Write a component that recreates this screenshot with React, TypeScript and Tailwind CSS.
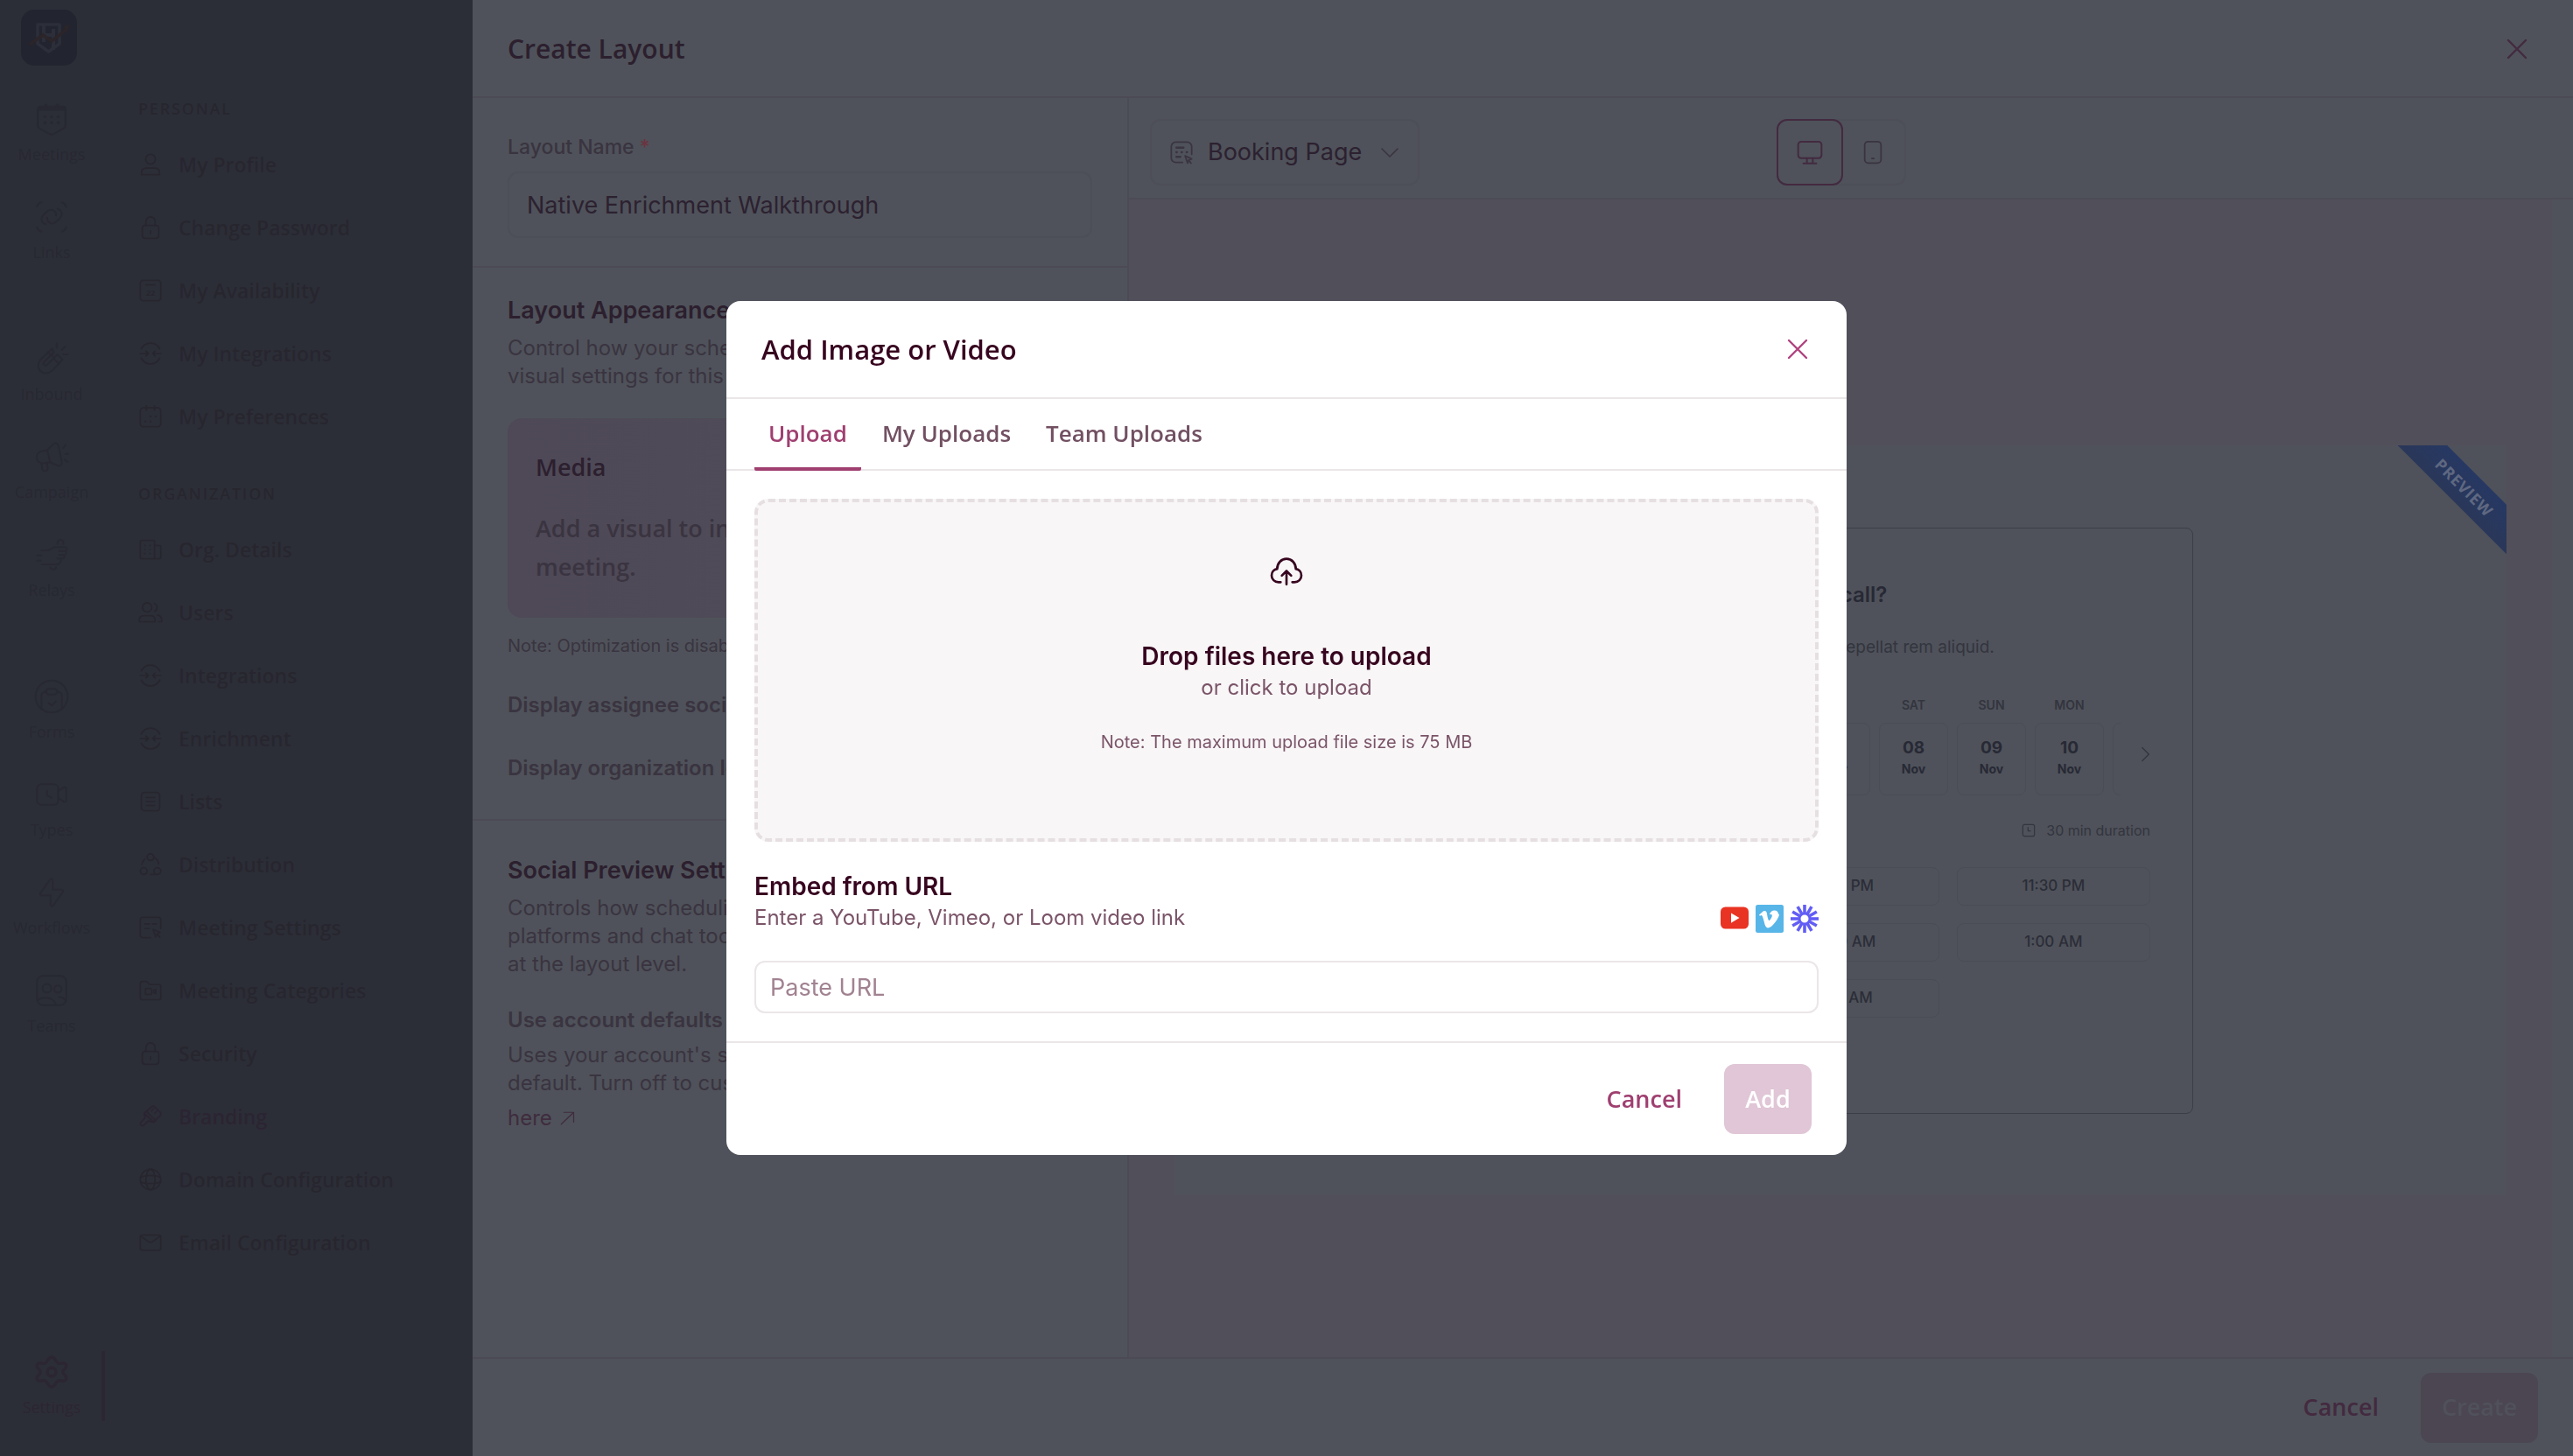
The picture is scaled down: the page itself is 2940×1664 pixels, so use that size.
import { FC, ReactNode } from 'react';

const headingFont = "font-['Open_Sans',sans-serif]";

interface IconProps {
  className?: string;
  strokeWidth?: number;
  children: ReactNode;
}

const Icon: FC<IconProps> = ({ className = 'size-7', strokeWidth = 1.5, children }) => (
  <svg
    viewBox="0 0 24 24"
    fill="none"
    stroke="currentColor"
    strokeWidth={strokeWidth}
    strokeLinecap="round"
    strokeLinejoin="round"
    className={className}
    aria-hidden="true"
  >
    {children}
  </svg>
);

const lockPaths = (
  <>
    <rect x="4" y="10" width="16" height="12.5" rx="2.5" />
    <path d="M7.5 10V6a4.5 4.5 0 0 1 9 0v4M12 15v3" />
  </>
);

const integrationPaths = (
  <>
    <path d="M3 7.500a10 10 0 0 1 18 0M3 16.500a10 10 0 0 0 18 0" />
    <path d="M2 12h7.500M7.500 9.500 10 12l-2.500 2.500M22 12h-7.500M16.500 9.500 14 12l2.500 2.500" />
  </>
);

const cursorPagePaths = (
  <>
    <path d="M12 22H4.500A2.500 2.500 0 0 1 2 19.500v-15A2.500 2.500 0 0 1 4.500 2h15A2.500 2.500 0 0 1 22 4.500V13" />
    <path d="M6.500 8.500h4.500M14 8.500h3.500M6.500 13h4" />
    <path d="m14.500 14 7 2.800-3.200 1.300L17 21.300zM18.300 18.100l2.700 3.400" />
  </>
);

const bookingPagePaths = (
  <>
    <path d="M13 22H6.500A4.500 4.500 0 0 1 2 17.500v-11A4.500 4.500 0 0 1 6.500 2h11A4.500 4.500 0 0 1 22 6.500V14" />
    <path strokeWidth="2" d="M7 7.500h7M7 12h.5M12 12h.5M17 12h.5M7 16.500h4" />
    <path d="m15.500 15.500 6.500 3-3 1.200-1 3zM19 19.700l2.300 3" />
  </>
);

const personalItems = [
  {
    label: 'My Profile',
    icon: (
      <>
        <circle cx="12" cy="6.800" r="4.800" />
        <path d="M3.200 22v-1.800c0-2.800 1.800-4.700 4.600-4.700h8.400c2.800 0 4.600 1.900 4.600 4.700V22z" />
      </>
    ),
  },
  { label: 'Change Password', icon: lockPaths },
  {
    label: 'My Availability',
    icon: (
      <>
        <rect x="2" y="2" width="20" height="20" rx="3" />
        <path d="M7.500 6.500h9" />
        <text x="12" y="17" textAnchor="middle" fontSize="8" fontWeight="700" fill="currentColor" stroke="none">
          22
        </text>
      </>
    ),
  },
  { label: 'My Integrations', icon: integrationPaths },
  {
    label: 'My Preferences',
    icon: (
      <>
        <rect x="2" y="3.500" width="20" height="18.500" rx="3" />
        <path d="M8 1.500V6M16 1.500V6" />
        <path strokeWidth="2.200" d="M12 12h.01M17 12h.01M7 17h.01M12 17h.01" />
      </>
    ),
  },
];

const organizationItems = [
  {
    label: 'Org. Details',
    icon: (
      <>
        <rect x="2" y="3" width="14" height="18" rx="1.500" />
        <path d="M16 8h4.500A1.500 1.500 0 0 1 22 9.500v10a1.500 1.500 0 0 1-1.500 1.500H16" />
        <path strokeWidth="1.800" d="M6.500 8h.01M11.500 8h.01M6.500 12h.01M11.500 12h.01M6.500 16h.01M11.500 16h.01" />
      </>
    ),
  },
  {
    label: 'Users',
    icon: (
      <>
        <circle cx="8.700" cy="7" r="4.500" />
        <path d="M1 21v-1.500c0-2.600 1.700-4.500 4.500-4.500H12c2.800 0 4.500 1.900 4.500 4.500V21z" />
        <path d="M16 3.200a4.200 4.200 0 0 1 0 7.600M19 14.500c2.400.6 4 2.400 4 5V21h-3" />
      </>
    ),
  },
  { label: 'Integrations', icon: integrationPaths },
  { label: 'Enrichment', icon: integrationPaths },
  {
    label: 'Lists',
    icon: (
      <>
        <rect x="3" y="3" width="18" height="18" rx="3" />
        <path d="M8 8h8M8 12h8M8 16h8" />
      </>
    ),
  },
  {
    label: 'Distribution',
    icon: (
      <>
        <circle cx="12" cy="4.800" r="3.300" />
        <circle cx="5.300" cy="18.500" r="3.300" />
        <circle cx="18.700" cy="18.500" r="3.300" />
        <path d="M6.500 6.500A8.500 8.500 0 0 0 3.500 12M16.500 5.500a9 9 0 0 1 3.500 6M12 21.800h5" />
      </>
    ),
  },
  { label: 'Meeting Settings', icon: cursorPagePaths },
  {
    label: 'Meeting Categories',
    icon: (
      <>
        <path d="M2 5a2 2 0 0 1 2-2h3.500c1.500 0 2.500 3 4 3H20a2 2 0 0 1 2 2v11a2 2 0 0 1-2 2H4a2 2 0 0 1-2-2z" />
        <rect x="7" y="10" width="6" height="6" rx="1.500" />
        <path d="m15 12 2.200-1v4L15 14z" />
      </>
    ),
  },
  { label: 'Security', icon: lockPaths },
  {
    label: 'Branding',
    active: true,
    icon: (
      <>
        <path d="m6 9 7-6.500c1-.8 2-.8 3 0l5.500 5.500c.8 1 .8 2 0 3L15 17.500z" />
        <path d="M6 9c-.8 2.500 1.500 3 .5 4.500l-3.800 4c-.9 1-.9 2 0 2.900.9.900 2 .9 2.900 0l4-4c1.500-1 2.500 1.500 5.400 1.100M8 7l9 9M13 6.500l2-2M16 9l2-2" />
      </>
    ),
  },
  {
    label: 'Domain Configuration',
    icon: (
      <>
        <circle cx="12" cy="12" r="10" />
        <ellipse cx="12" cy="12" rx="4.500" ry="10" />
        <path d="M2.500 10c3-2.700 16-2.700 19 0M2.500 14c3 2.700 16 2.700 19 0" />
      </>
    ),
  },
  {
    label: 'Email Configuration',
    icon: (
      <>
        <rect x="2" y="4.500" width="20" height="15" rx="2" />
        <path d="m3 6 6.700 5c1.500 1.100 3.100 1.100 4.600 0L21 6" />
      </>
    ),
  },
];

const railGroups = [
  [
    {
      label: 'Meetings',
      icon: (
        <>
          <path d="M2.500 5.500c0-1.200.8-2 2-2h15c1.200 0 2 .8 2 2V16c0 1.200-.4 2-1.500 2.600l-6.500 3.600c-1 .5-2 .5-3 0L4 18.600C2.900 18 2.500 17.200 2.500 16z" />
          <path strokeWidth="2.200" d="M3 5.200h18M8 2.600v1M16 2.600v1M7.500 10.500h.01M12 10.500h.01M16.500 10.500h.01M7.500 14.500h.01M12 14.500h.01M16.500 14.500h.01" />
        </>
      ),
    },
    {
      label: 'Links',
      icon: (
        <>
          <path d="M2 5c.4-1.500 1.500-2.600 3-3M19 2c1.500.4 2.600 1.500 3 3M2 19c.4 1.500 1.500 2.600 3 3M19 22c1.500-.4 2.600-1.500 3-3" />
          <path d="M8 17c-3-.8-4-4-1.800-6.200l3-2.800c2.600-2.200 6-.2 5.800 3" />
          <path d="M16 6.500c3 .8 4 4 1.800 6.200l-3 2.800c-2.600 2.200-6 .2-5.800-3" />
        </>
      ),
    },
  ],
  [
    {
      label: 'Inbound',
      icon: (
        <>
          <path d="m12.500 5-8 7.500c-5 5.500 2 13 8 7.500l7-7.500-3.500-3.500-7 7c-2 1.500-3.500-.5-2-2l6.500-6.500z" />
          <path d="m9.500 7.500 3.500 3M13.500 12l3.500 3.500M15.500 1.500v3M19 6l2.500-2.500M20 9h3" />
        </>
      ),
    },
    {
      label: 'Campaign',
      icon: (
        <>
          <path d="M9 7.500 13 3.500c1.500-1.300 3.200-.8 3.700 1l2.300 11c.3 2-1.300 3.300-3 2.500L11 15.800l-4.500.7c-5.500.3-6.500-7-1.500-8.300z" />
          <path d="m9 7.500 2 8.300M5 16.700l.6 4c.6 1.800 3.700 1.300 3.700-.8L8.800 16M20 6l1.500-2M21.500 10H24M21 14l2 1.500" />
        </>
      ),
    },
    {
      label: 'Relays',
      icon: (
        <>
          <path d="M5 9h4c2 0 3-2.200 5.500-2.200h6.700c1.600 0 1.600 2.700 0 2.700H17h4c1.400 0 1.200 2.600-.3 2.600H17h3c1.300 0 1 2.500-.4 2.500H16h2.500c-.2 2.900-1 4-3.500 4H5M2 12.500h3M2 16h2.500" />
          <path d="M16 4.500c.3-3.700 4.500-3.500 4 0M11 20.500c.3 2 3.700 2 4 0" />
        </>
      ),
    },
  ],
  [
    {
      label: 'Forms',
      icon: (
        <>
          <circle cx="12" cy="12" r="11" />
          <path d="M5 20.500V11c0-1.500.8-2.200 3.200-2.200M19 20.500V11c0-1.500-.8-2.200-3.200-2.200M10 16.500l2 1.700 3-3" />
          <rect x="8.200" y="6.800" width="7.600" height="3.800" rx="1.900" />
        </>
      ),
    },
    {
      label: 'Types',
      icon: (
        <>
          <rect x="2" y="5" width="14.500" height="14" rx="3" />
          <path d="m16.500 9.500 3.600-2.200c1.200-.6 1.900-.3 1.900.9v7.600c0 1.200-.7 1.500-1.900.9l-3.600-2.200M8.800 9.500v3l3 1.700" />
        </>
      ),
    },
    {
      label: 'Workflows',
      icon: (
        <path d="M12.800 9.500V4c0-1.500-1.100-1.900-2-.7l-6.300 8.800c-.7 1-.4 1.900.9 1.900h5.800V20c0 1.500 1.100 1.900 2 .7l6.300-8.800c.7-1 .4-1.900-.9-1.900h-5.800z" />
      ),
    },
    {
      label: 'Teams',
      icon: (
        <>
          <rect x="2" y="2" width="20" height="20" rx="4" />
          <circle cx="8.800" cy="10.500" r="3" />
          <circle cx="16.300" cy="11" r="2.500" />
          <path d="M3 18.500c1.500-2 9.500-3 12 3M17 16.500c2 0 3.700.8 4.700 2.500" />
        </>
      ),
    },
  ],
];

interface RailItemProps {
  label: string;
  icon: ReactNode;
  active?: boolean;
}

const RailItem: FC<RailItemProps> = ({ label, icon, active }) => (
  <a
    href="#"
    className={`relative flex h-28 flex-col items-center justify-center gap-2 ${active ? 'text-[#2c2532]' : 'text-[#272832]'}`}
  >
    <Icon className="size-10" strokeWidth={active ? 2 : 1.2}>
      {icon}
    </Icon>
    <span className="text-[18px] leading-6 font-medium">{label}</span>
    {active && <span className="absolute top-4 -right-0.5 h-20 w-1 rounded-full bg-[#2c2532]" />}
  </a>
);

interface MenuSectionProps {
  title: string;
  items: { label: string; icon: ReactNode; active?: boolean }[];
}

const MenuSection: FC<MenuSectionProps> = ({ title, items }) => (
  <section>
    <h3 className="pl-10 text-[18px] leading-6 font-semibold tracking-widest">{title}</h3>
    <ul className="mt-4">
      {items.map((item) => (
        <li key={item.label}>
          <a
            href="#"
            className={`flex h-18 items-center gap-[18px] pl-10 ${item.active ? 'text-[#2b2432]' : 'text-[#27262f]'}`}
          >
            <Icon>{item.icon}</Icon>
            <span className="text-[23px] leading-8 font-semibold">{item.label}</span>
          </a>
        </li>
      ))}
    </ul>
  </section>
);

const Sidebar: FC = () => (
  <aside className={`flex w-[540px] shrink-0 bg-[#2c2e37] text-[#27262f] ${headingFont}`}>
    <nav aria-label="Main" className="flex w-[118px] flex-col pb-6">
      <div className="h-24 pt-[11px] pl-6">
        <svg viewBox="0 0 64 64" className="size-16" fill="none" aria-label="Home">
          <rect width="64" height="64" rx="15" fill="#222430" />
          <path d="M19 17h25v22l-12.500 9L19 39z" stroke="#2c2e39" strokeWidth="3.500" strokeLinejoin="round" />
          <path d="M26 18v19M37 22v24M26 29h11" stroke="#2c2e39" strokeWidth="4" />
          <path d="m10 40 15-11 10 7 18-14" stroke="#2b2529" strokeWidth="3.500" />
          <path d="m48 19 8-1.500L53 25z" fill="#2b2529" />
        </svg>
      </div>
      <div className="flex flex-1 flex-col gap-[50px]">
        {railGroups.map((group, i) => (
          <div key={i}>
            {group.map((item) => (
              <RailItem key={item.label} label={item.label} icon={item.icon} />
            ))}
          </div>
        ))}
      </div>
      <RailItem
        active
        label="Settings"
        icon={
          <>
            <path d="M12 1.800c2.600 0 2.600 3.700 4.600 4.300 2 .5 4.600-1.300 5.400 1.100.7 2.400-2.400 2.900-2.400 4.800s3.100 2.400 2.400 4.800c-.8 2.400-3.400.6-5.400 1.100-2 .6-2 4.300-4.600 4.300s-2.600-3.700-4.600-4.300c-2-.5-4.600 1.300-5.400-1.100-.7-2.400 2.400-2.900 2.400-4.800s-3.100-2.400-2.400-4.800c.8-2.400 3.400-.6 5.400-1.100 2-.6 2-4.300 4.600-4.300z" />
            <circle cx="12" cy="12" r="3" />
          </>
        }
      />
    </nav>
    <nav aria-label="Settings" className="flex flex-1 flex-col gap-10 pt-28">
      <MenuSection title="PERSONAL" items={personalItems} />
      <MenuSection title="ORGANIZATION" items={organizationItems} />
    </nav>
  </aside>
);

const LayoutForm: FC = () => (
  <div className="w-[750px] shrink-0 border-r-2 border-[#4c4b55] text-[#3a3440]">
    <section className="border-b-2 border-[#4c4b55] px-10 pt-10 pb-8">
      <label htmlFor="layout-name" className="block text-[23px] leading-8 font-medium">
        Layout Name <span className="text-[#6b3440]">*</span>
      </label>
      <input
        id="layout-name"
        defaultValue="Native Enrichment Walkthrough"
        className="mt-3 h-19 w-full rounded-xl border-2 border-[#4d4e58] px-5 text-[27px] text-[#2c2130]"
      />
    </section>

    <section className="border-b-2 border-[#4c4b55] px-10 pt-8 pb-[42px]">
      <h2 className="text-[27px] leading-[34px] font-semibold text-[#2c1f2e]">Layout Appearance</h2>
      <p className="mt-2.5 text-[24px] leading-8">
        Control how your scheduling page looks and edit
        <br />
        visual settings for this layout.
      </p>
      <div className={`mt-8 rounded-2xl bg-linear-to-r from-[#4e4857] to-[#504f58] px-8 py-9 ${headingFont}`}>
        <h3 className="text-[27px] leading-10 font-semibold text-[#2c1f2e]">Media</h3>
        <p className="mt-7 text-[27px] leading-11 font-semibold">
          Add a visual to introduce your
          <br />
          meeting.
        </p>
      </div>
      <p className="mt-5 text-[20px] leading-6">Note: Optimization is disabled for media</p>
      <p className="mt-10 text-[24px] leading-8 font-semibold">Display assignee social links</p>
      <p className="mt-10 text-[24px] leading-8 font-semibold">Display organization logo</p>
    </section>

    <section className="px-10 pt-10">
      <h2 className="text-[27px] leading-[34px] font-semibold text-[#2c1f2e]">Social Preview Settings</h2>
      <p className="mt-2.5 text-[24px] leading-8">
        Controls how scheduling links appear on social
        <br />
        platforms and chat tools. Can be customized
        <br />
        at the layout level.
      </p>
      <p className="mt-8 text-[24px] leading-8 font-semibold">Use account defaults</p>
      <p className="mt-2 text-[24px] leading-8">
        Uses your account&apos;s social preview settings by
        <br />
        default. Turn off to customize. Manage defaults
      </p>
      <a href="#" className="mt-2 flex items-center gap-2 text-[24px] leading-8 text-[#3f2c3e]">
        here
        <Icon className="size-[18px]" strokeWidth={1.6}>
          <path d="M3 21 21 4M7 3h15v15" />
        </Icon>
      </a>
    </section>
  </div>
);

const days = [
  ['TUE', '04'],
  ['WED', '05'],
  ['THU', '06'],
  ['FRI', '07'],
  ['SAT', '08'],
  ['SUN', '09'],
  ['MON', '10'],
  ['TUE', '11'],
];

const slots = ['10:30 PM', '11:00 PM', '11:30 PM', '12:00 AM', '12:30 AM', '1:00 AM', '1:30 AM', '2:00 AM'];

const BookingCard: FC = () => (
  <div className="flex h-[670px] w-[806px] flex-col rounded-lg border border-[#3b3e47] px-12 pt-15 text-[#33353f]">
    <h2 className="text-[24px] leading-8 font-semibold text-[#272935]">When should we arrange your call?</h2>
    <p className="mt-7 text-[19px] leading-8">Lorem ipsum dolor sit amet elit dolores repellat rem aliquid.</p>
    <div className="mt-[38px] flex items-center">
      <button type="button" aria-label="Previous days" className="mt-[22px] flex w-[42px] items-center">
        <Icon className="size-5" strokeWidth={1.6}>
          <path d="M11 3 2 12l9 9" />
        </Icon>
      </button>
      <div className="flex w-[632px] gap-2.5 overflow-hidden">
        {days.map(([day, date]) => (
          <div key={date} className="w-[79px] shrink-0 text-center">
            <div className="text-[14px] leading-6 font-semibold">{day}</div>
            <button
              type="button"
              className="mt-2 flex h-[83px] w-full flex-col items-center justify-center rounded-lg border border-[#4b4d56] text-[#272935]"
            >
              <span className="text-[19px] leading-6 font-bold">{date}</span>
              <span className="text-[14px] leading-6 font-bold">Nov</span>
            </button>
          </div>
        ))}
      </div>
      <button type="button" aria-label="Next days" className="mt-[22px] flex flex-1 justify-end">
        <Icon className="size-5" strokeWidth={1.6}>
          <path d="m13 3 9 9-9 9" />
        </Icon>
      </button>
    </div>
    <div className="mt-6 flex items-center justify-end gap-3 text-[16px] leading-8">
      <Icon className="size-4" strokeWidth={1.8}>
        <rect x="2" y="2" width="20" height="20" rx="3" />
        <path d="M11 7v6h4" />
      </Icon>
      30 min duration
    </div>
    <div className="mt-[26px] ml-1 grid grid-cols-3 gap-5">
      {slots.map((slot) => (
        <button
          key={slot}
          type="button"
          className="h-11 rounded-lg border border-[#4b4d56] text-[17px] font-medium text-[#2b2d38]"
        >
          {slot}
        </button>
      ))}
    </div>
  </div>
);

const PreviewPane: FC = () => (
  <div className="flex min-w-0 flex-1 flex-col">
    <div className="flex h-[116px] items-start justify-between border-b-2 border-[#4c4b55] pt-6 pr-[762px] pl-6">
      <button
        type="button"
        className="flex h-19 items-center rounded-xl border-2 border-[#4d4e58] px-5 text-[27px] text-[#2c2130]"
      >
        <Icon className="size-7 text-[#3a3440]">{bookingPagePaths}</Icon>
        <span className="ml-4">Booking Page</span>
        <Icon className="ml-5 size-6 text-[#3a3440]" strokeWidth={1.6}>
          <path d="m3 8 9 9 9-9" />
        </Icon>
      </button>
      <div className="flex h-19 rounded-xl border-2 border-[#4d4e58]">
        <button
          type="button"
          aria-label="Desktop preview"
          className="-m-0.5 flex w-19 items-center justify-center rounded-xl border-2 border-[#432a40] text-[#432a40]"
        >
          <Icon className="size-8">
            <rect x="2" y="3" width="20" height="14" rx="2.500" />
            <path d="M9.500 17v4M14.500 17v4M6.500 21.500h11" />
          </Icon>
        </button>
        <button type="button" aria-label="Mobile preview" className="flex w-18 items-center justify-center text-[#3a3440]">
          <Icon className="size-7">
            <rect x="4" y="1.500" width="16" height="21" rx="3.500" />
            <path d="M11 18h2" />
          </Icon>
        </button>
      </div>
    </div>
    <div className="flex flex-1">
      <div className="flex flex-1 items-center justify-center bg-[#514f59] px-[52px] pt-24">
        <div className="relative flex aspect-video w-full items-center justify-center bg-[#4f525a]">
          <BookingCard />
          <div className="absolute top-0 right-0 size-[124px] overflow-hidden">
            <div
              className={`absolute top-[28px] -left-6 flex h-10 w-[200px] rotate-45 items-center justify-center bg-linear-to-b from-[#263863] to-[#2a3759] text-[18px] font-bold tracking-wider text-[#5f6881] ${headingFont}`}
            >
              PREVIEW
            </div>
          </div>
        </div>
      </div>
      <div className="w-6 shrink-0" />
    </div>
  </div>
);

const CloseIcon: FC = () => (
  <Icon className="size-8" strokeWidth={1.8}>
    <path d="m4.500 4.500 15 15M19.500 4.500l-15 15" />
  </Icon>
);

const CreateLayout: FC = () => (
  <main className="flex min-w-0 flex-1 flex-col bg-[#4f525a]">
    <header className="flex h-28 items-center justify-between border-b-2 border-[#4c4b55] px-10 pt-0.5">
      <h1 className={`text-[30px] leading-10 font-semibold text-[#2c1f2e] ${headingFont}`}>Create Layout</h1>
      <button type="button" aria-label="Close" className="flex w-12 items-center justify-center text-[#432a40]">
        <CloseIcon />
      </button>
    </header>
    <div className="flex flex-1">
      <LayoutForm />
      <PreviewPane />
    </div>
    <footer
      className={`flex h-[113px] items-center justify-end border-t-2 border-[#4c4b55] px-10 text-[27px] font-semibold ${headingFont}`}
    >
      <button type="button" className="h-20 px-12 text-[#432a40]">
        Cancel
      </button>
      <button type="button" disabled className="h-20 w-[134px] rounded-xl bg-[#4b4652] text-[#50515b]">
        Create
      </button>
    </footer>
  </main>
);

const VideoProviders: FC = () => (
  <div className="flex items-center gap-2">
    <svg viewBox="0 0 32 32" className="size-8" aria-label="YouTube">
      <rect y="2.500" width="32" height="25" rx="5.500" fill="#e93323" />
      <path d="M12 9.500v11.200l9.500-5.600z" fill="#fff" />
    </svg>
    <svg viewBox="0 0 32 32" className="size-8" aria-label="Vimeo">
      <rect width="32" height="32" rx="2.500" fill="#57b5e7" />
      <path
        d="M27 10.800c-.1 2.300-1.700 5.500-4.800 9.500-3.200 4.100-5.900 6.200-8.100 6.200-1.400 0-2.500-1.300-3.500-3.800l-1.900-7c-.7-2.500-1.400-3.800-2.200-3.800-.2 0-.7.3-1.600.9L4 11.600c1-.9 2-1.800 3-2.700 1.300-1.200 2.400-1.800 3-1.800 1.600-.2 2.600.9 3 3.200.4 2.500.7 4.100.9 4.700.5 2.100 1 3.100 1.500 3.100.4 0 1.100-.7 2-2.100.9-1.400 1.300-2.400 1.400-3.200.1-1.200-.4-1.800-1.400-1.800-.5 0-1 .1-1.500.3 1-3.300 2.900-4.900 5.700-4.800 2.900.1 4.300 1.500 4.400 4.300z"
        fill="#fff"
      />
    </svg>
    <svg viewBox="0 0 32 32" className="size-8" stroke="#625df5" strokeWidth="3.600" aria-label="Loom">
      {[0, 30, 60, 90, 120, 150, 180, 210, 240, 270, 300, 330].map((angle) => (
        <path key={angle} d="M16 0v11" transform={`rotate(${angle} 16 16)`} />
      ))}
      <circle cx="16" cy="16" r="6" strokeWidth="3" fill="#fff" />
    </svg>
  </div>
);

const tabs = ['Upload', 'My Uploads', 'Team Uploads'];

const AddMediaModal: FC = () => (
  <div className="fixed inset-0 flex items-center justify-center">
    <div
      role="dialog"
      aria-modal="true"
      aria-labelledby="media-title"
      className="w-[1280px] rounded-2xl bg-white text-[#7b5468]"
    >
      <div className="flex h-28 items-center justify-between border-b-2 border-[#ebe6e8] px-10">
        <h2 id="media-title" className={`text-[31px] leading-10 font-semibold text-[#37051f] ${headingFont}`}>
          Add Image or Video
        </h2>
        <button type="button" aria-label="Close dialog" className="flex w-8 items-center justify-center text-[#b0427f]">
          <CloseIcon />
        </button>
      </div>

      <div role="tablist" className={`flex h-[82px] gap-2 border-b-2 border-[#ebe6e8] px-8 ${headingFont}`}>
        {tabs.map((tab, i) => (
          <button
            key={tab}
            type="button"
            role="tab"
            aria-selected={i === 0}
            className={`-mb-0.5 border-b-4 px-4 text-[26px] font-semibold ${
              i === 0 ? 'rounded-xs border-[#9f3f70] text-[#9f3f70]' : 'border-transparent text-[#725062]'
            }`}
          >
            {tab}
          </button>
        ))}
      </div>

      <div className="p-8">
        <button
          type="button"
          className="flex h-[392px] w-full flex-col items-center rounded-2xl border-4 border-dashed border-[#e6dfe2] bg-[#f8f6f7] pt-[58px]"
        >
          <Icon className="size-10 text-[#37051f]" strokeWidth={1.6}>
            <path d="M8 20H6.500C3.800 20 1.800 18 1.800 15.400c0-2.300 1.600-4.100 3.800-4.500C5.600 7 8.400 4 12 4s6.400 3 6.400 6.900c2.200.4 3.800 2.200 3.800 4.500 0 2.600-2 4.600-4.700 4.600H16M12 21.500v-9M8.800 15.500l3.200-3.200 3.200 3.200" />
          </Icon>
          <span className="mt-15 text-[28px] leading-9 font-semibold text-[#37051f]">Drop files here to upload</span>
          <span className="text-[24px] leading-9">or click to upload</span>
          <span className="mt-7 text-[20px] leading-8">Note: The maximum upload file size is 75 MB</span>
        </button>

        <div className="mt-8 flex items-end justify-between">
          <div>
            <label htmlFor="embed-url" className="block text-[28px] leading-[38px] font-semibold text-[#37051f]">
              Embed from URL
            </label>
            <p className="text-[24px] leading-[34px]">Enter a YouTube, Vimeo, or Loom video link</p>
          </div>
          <VideoProviders />
        </div>
        <input
          id="embed-url"
          type="url"
          placeholder="Paste URL"
          className="mt-8 block h-15 w-full rounded-xl border-2 border-[#ebe6e8] px-4 text-[27px] placeholder:text-[#a18291]"
        />
      </div>

      <div
        className={`flex h-[130px] items-center justify-end border-t-2 border-[#ebe6e8] px-10 text-[27px] font-semibold ${headingFont}`}
      >
        <button type="button" className="h-20 px-12 text-[#9f3f70]">
          Cancel
        </button>
        <button type="button" disabled className="h-20 w-[100px] rounded-xl bg-[#e0c6d6] text-white">
          Add
        </button>
      </div>
    </div>
  </div>
);

export default function App() {
  return (
    <div className="flex min-h-screen font-['Inter',sans-serif]">
      <Sidebar />
      <CreateLayout />
      <AddMediaModal />
    </div>
  );
}
